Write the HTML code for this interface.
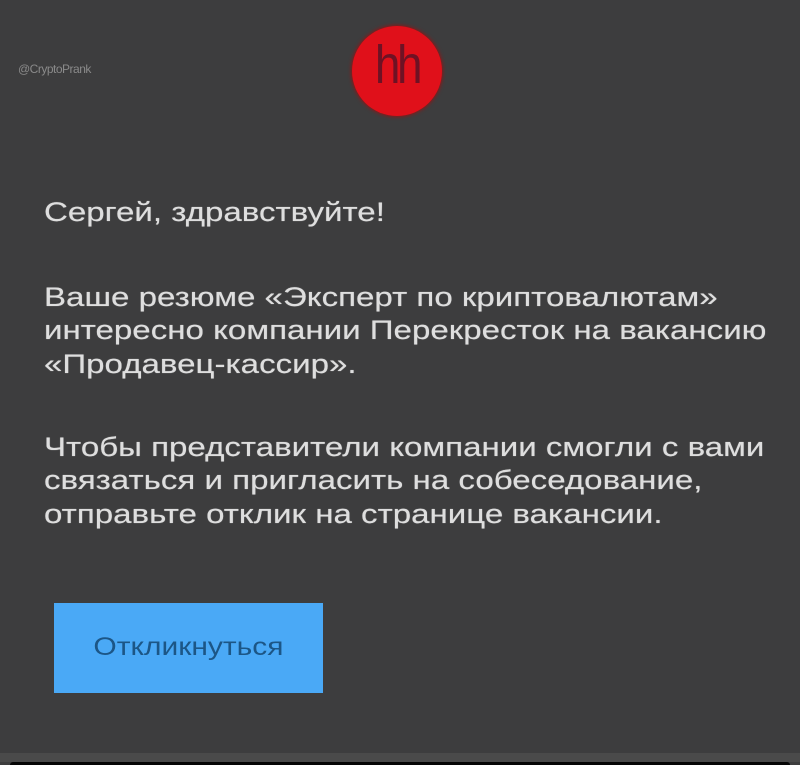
<!DOCTYPE html>
<html><head><meta charset="utf-8"><style>
html,body{margin:0;padding:0;width:800px;height:765px;overflow:hidden;background:#3d3d3e;}
.t{position:absolute;left:44px;font-family:"Liberation Sans",Arial,sans-serif;font-size:27px;color:#dedede;white-space:nowrap;transform-origin:0 50%;transform:scaleX(1.225);line-height:34px;text-shadow:0 0 0.6px #dedede;}
</style></head><body>
<div style="position:absolute;left:18px;top:62px;font-family:'Liberation Sans',sans-serif;font-size:12px;color:#8a8a8a;letter-spacing:-0.5px">@CryptoPrank</div>
<div style="position:absolute;left:352px;top:26px;width:90px;height:90px;border-radius:50%;background:#e0101a;box-shadow:0 0 4px #b00"></div>
<div style="position:absolute;left:352px;top:34px;width:90px;text-align:center;font-family:'Liberation Sans',sans-serif;font-size:54px;color:#6e1224;letter-spacing:-4px;transform:scaleX(0.85)">hh</div>
<div class="t" style="top:195px">Сергей, здравствуйте!</div>
<div class="t" style="top:280px">Ваше резюме «Эксперт по криптовалютам»</div>
<div class="t" style="top:313px">интересно компании Перекресток на вакансию</div>
<div class="t" style="top:347px">«Продавец-кассир».</div>
<div class="t" style="top:430px">Чтобы представители компании смогли с вами</div>
<div class="t" style="top:463px">связаться и пригласить на собеседование,</div>
<div class="t" style="top:497px">отправьте отклик на странице вакансии.</div>
<div style="position:absolute;left:54px;top:603px;width:269px;height:90px;background:#4aa9f6;"></div>
<div style="position:absolute;left:54px;top:603px;width:269px;height:90px;line-height:88px;text-align:center;font-family:'Liberation Sans',sans-serif;font-size:25px;color:#1c5686;transform:scaleX(1.2)">Откликнуться</div>
<div style="position:absolute;left:0;top:753px;width:800px;height:9px;background:#4a4a4a"></div>
<div style="position:absolute;left:10px;top:762px;width:780px;height:3px;background:#050505;border-radius:4px 4px 0 0"></div>
</body></html>
